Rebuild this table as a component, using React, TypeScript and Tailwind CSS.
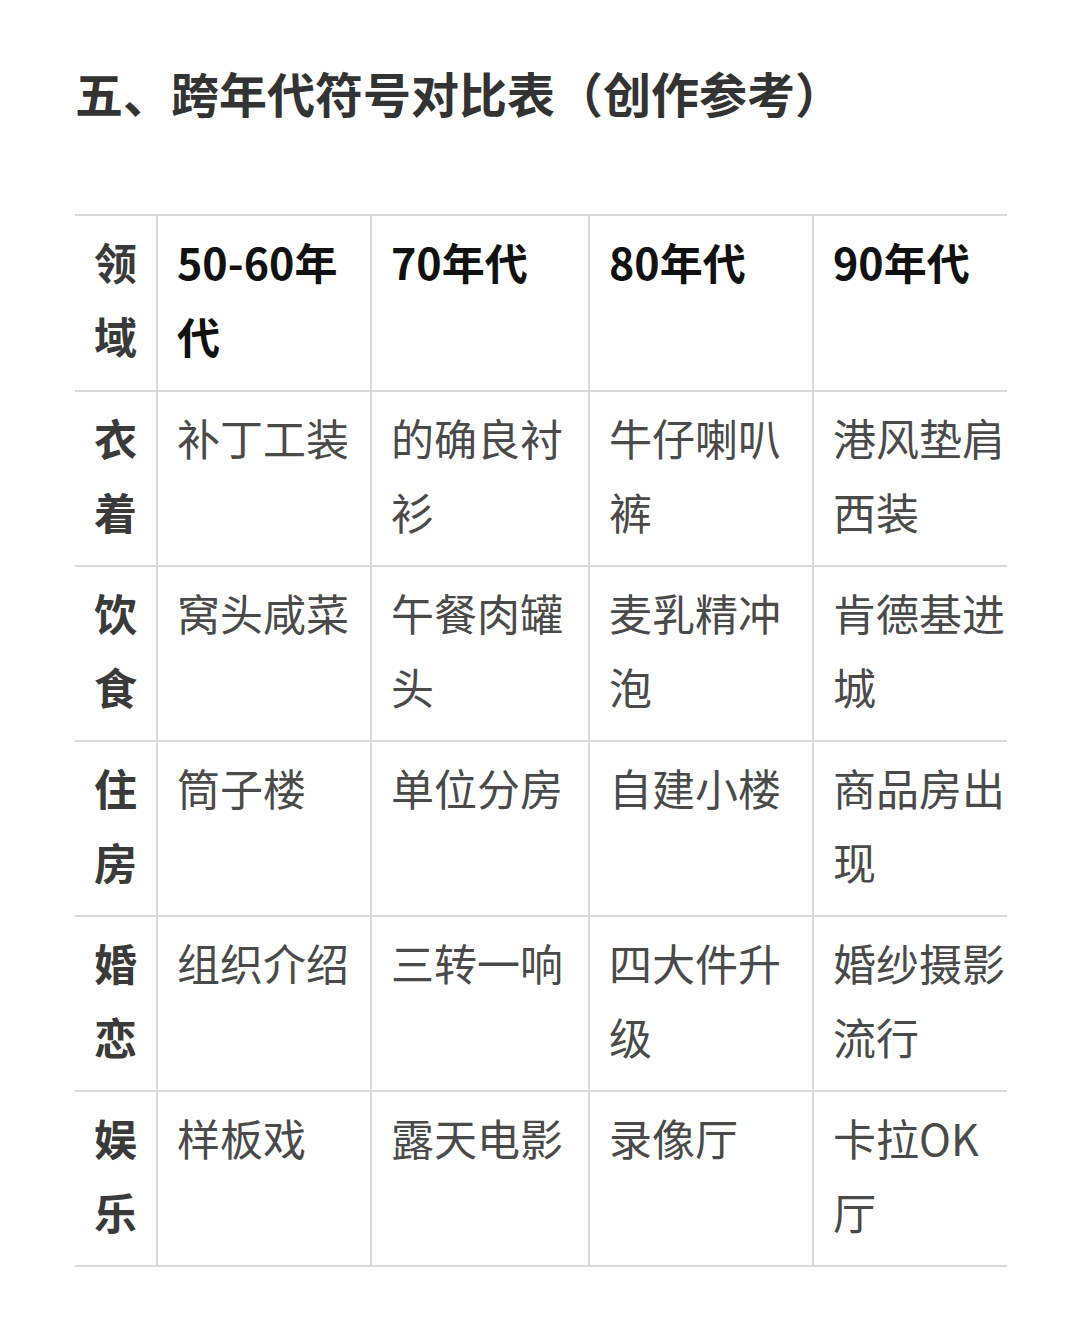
const headers = ['领域', '50-60年代', '70年代', '80年代', '90年代'];

const rows: string[][] = [
  ['衣着', '补丁工装', '的确良衬衫', '牛仔喇叭裤', '港风垫肩西装'],
  ['饮食', '窝头咸菜', '午餐肉罐头', '麦乳精冲泡', '肯德基进城'],
  ['住房', '筒子楼', '单位分房', '自建小楼', '商品房出现'],
  ['婚恋', '组织介绍', '三转一响', '四大件升级', '婚纱摄影流行'],
  ['娱乐', '样板戏', '露天电影', '录像厅', '卡拉OK厅'],
];

const widths = ['w-[82px]', 'w-[214px]', 'w-[218px]', 'w-[224px]', 'w-[194px]'];

export default function App() {
  return (
    <div
      className="min-h-[1335px] bg-white px-[75px] pt-[58px]"
      style={{ fontFamily: '"Noto Sans CJK SC", "Noto Sans", sans-serif' }}
    >
      <h1 className="text-[48px] font-bold leading-[68px] text-[#333333]">
        五、跨年代符号对比表（创作参考）
      </h1>

      <table className="mt-[88px] w-[932px] table-fixed border-collapse">
        <colgroup>
          {widths.map((w, i) => (
            <col key={i} className={w} />
          ))}
        </colgroup>
        <thead>
          <tr className="border-t-2 border-b-2 border-[#dadada]">
            {headers.map((h, i) => (
              <th
                key={h}
                className={`h-[176px] pl-[19px] pr-0 pt-[8px] pb-[16px] text-left align-top text-[43px] font-bold leading-[74px] ${
                  i === 0 ? 'text-[#3a3a3a]' : 'border-l-2 border-[#dadada] text-[#111111]'
                }`}
              >
                {h}
              </th>
            ))}
          </tr>
        </thead>
        <tbody>
          {rows.map((r) => (
            <tr key={r[0]} className="border-b-2 border-[#dadada]">
              {r.map((c, i) => (
                <td
                  key={i}
                  className={`h-[175px] pl-[19px] pr-0 pt-[8px] pb-[16px] align-top text-[43px] leading-[74px] ${
                    i === 0
                      ? 'font-bold text-[#3a3a3a]'
                      : 'border-l-2 border-[#dadada] text-[#4a4a4a]'
                  }`}
                >
                  {c}
                </td>
              ))}
            </tr>
          ))}
        </tbody>
      </table>
    </div>
  );
}
